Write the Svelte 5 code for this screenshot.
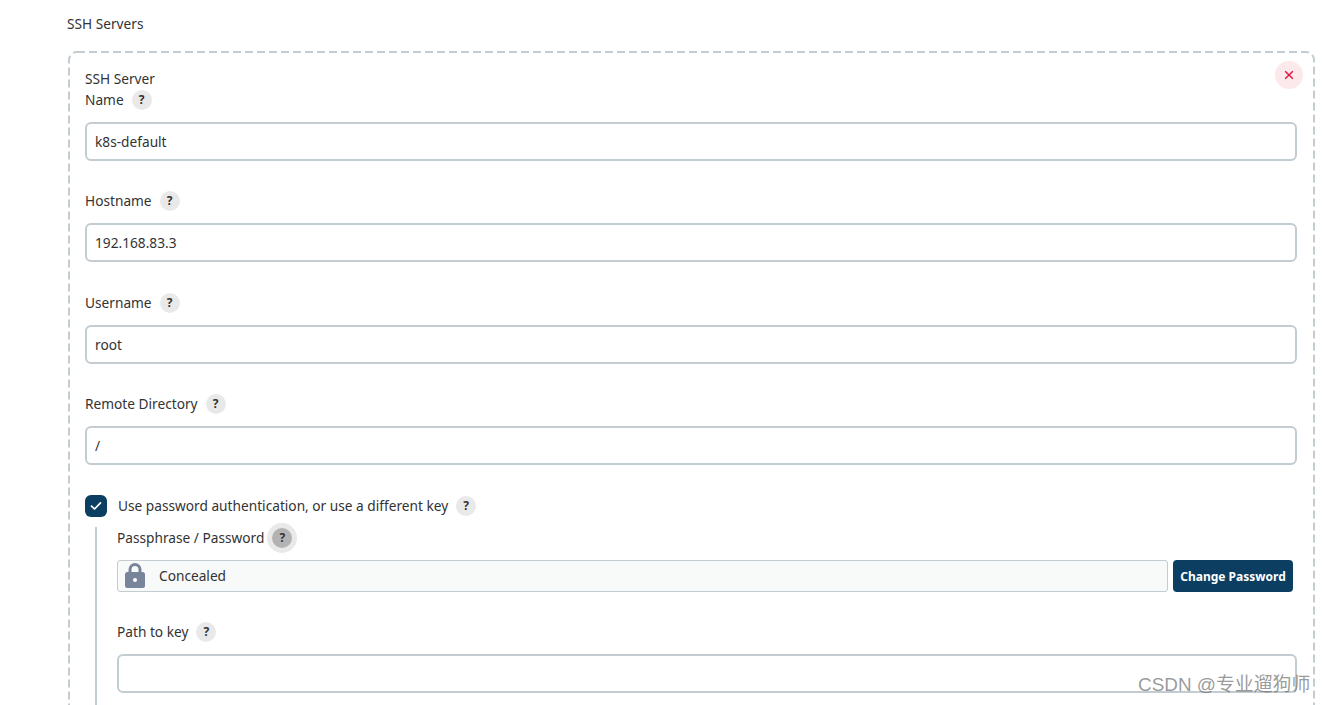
<script lang="ts">
	interface Field {
		label: string;
		value: string;
	}

	const fields: Field[] = [
		{ label: 'Hostname', value: '192.168.83.3' },
		{ label: 'Username', value: 'root' },
		{ label: 'Remote Directory', value: '/' }
	];
</script>

<div class="page">
	<div class="section-title">SSH Servers</div>

	<div class="repeated">
		<svg class="dashes" aria-hidden="true"><rect class="dash-rect" /></svg>

		<button class="delete" aria-label="Delete">
			<svg width="10" height="10" viewBox="0 0 10 10">
				<path d="M1.2 1.2 8.8 8.8M8.8 1.2 1.2 8.8" stroke="#e6103c" stroke-width="1.4" fill="none" />
			</svg>
		</button>

		<div class="server-title">SSH Server</div>
		<div class="label">Name <span class="help">?</span></div>
		<input class="text" value="k8s-default" />

		{#each fields as field}
			<div class="label">{field.label} <span class="help">?</span></div>
			<input class="text" value={field.value} />
		{/each}

		<div class="check-row">
			<span class="checkbox">
				<svg width="12" height="10" viewBox="0 0 12 10">
					<path d="M1.5 5.2 4.5 8 10.5 1.8" stroke="#fff" stroke-width="1.7" fill="none" stroke-linecap="round" stroke-linejoin="round" />
				</svg>
			</span>
			<span class="check-label">Use password authentication, or use a different key</span>
			<span class="help">?</span>
		</div>

		<div class="nested">
			<div class="label">Passphrase / Password <span class="help hovered">?</span></div>
			<div class="pass-row">
				<div class="concealed">
					<svg width="20" height="25" viewBox="0 0 20 25">
						<path d="M5 10V6.5a5 5 0 0 1 10 0V10" stroke="#78849a" stroke-width="3" fill="none" />
						<rect x="0" y="9" width="20" height="16" rx="2.5" fill="#78849a" />
						<circle cx="10" cy="17" r="2" fill="#fff" />
					</svg>
					<span>Concealed</span>
				</div>
				<button class="change">Change Password</button>
			</div>
			<div class="label key-label">Path to key <span class="help">?</span></div>
			<input class="text" value="" />
		</div>
	</div>

	<div class="watermark">CSDN @专业遛狗师</div>
</div>

<style>
	:global(body) {
		margin: 0;
		background: #fff;
	}

	.page {
		position: relative;
		height: 705px;
		overflow: hidden;
		padding: 14px 10px 0 68px;
		box-sizing: border-box;
		font-family: 'Noto Sans', 'Noto Sans CJK SC', sans-serif;
		font-size: 13.7px;
		color: #333;
	}

	.section-title {
		line-height: 20px;
		height: 20px;
		margin-left: -1px;
	}

	.repeated {
		position: relative;
		margin-top: 17px;
		padding: 18px 18px 0 17px;
		height: 800px;
		box-sizing: border-box;
	}

	/* svg outline because a css dashed border can't do the 8/4 dash length */
	.dashes {
		position: absolute;
		inset: 0;
		width: 100%;
		height: 100%;
		pointer-events: none;
	}

	.dash-rect {
		x: 1px;
		y: 1px;
		width: calc(100% - 2px);
		height: calc(100% - 2px);
		rx: 8px;
		fill: none;
		stroke: #c3ccd1;
		stroke-width: 2;
		stroke-dasharray: 8 4;
	}

	.delete {
		position: absolute;
		top: 10px;
		right: 12px;
		width: 28px;
		height: 28px;
		padding: 0;
		border: 0;
		border-radius: 50%;
		background: #fbe9ec;
		display: flex;
		align-items: center;
		justify-content: center;
	}

	.server-title {
		line-height: 20px;
	}

	.label {
		display: flex;
		align-items: center;
		gap: 8px;
		height: 22px;
		margin: 0 0 11px;
		line-height: 20px;
	}

	.help {
		display: inline-flex;
		align-items: center;
		justify-content: center;
		width: 20px;
		height: 20px;
		border-radius: 50%;
		background: #e9e9e9;
		color: #333;
		font-size: 12px;
		font-weight: 700;
		line-height: 1;
	}

	.help.hovered {
		background: #b3b3b3;
		box-shadow: 0 0 0 5px #e9e9e9;
	}

	.text {
		display: block;
		width: 100%;
		height: 39px;
		box-sizing: border-box;
		margin: 0 0 29.4px;
		padding: 0 8px;
		border: 2px solid #c3ccd1;
		border-radius: 6px;
		background: #fff;
		font: inherit;
		color: #333;
		outline: none;
	}

	.check-row {
		display: flex;
		align-items: center;
		height: 22px;
		margin-top: 0.4px;
	}

	.checkbox {
		display: flex;
		align-items: center;
		justify-content: center;
		width: 22px;
		height: 22px;
		border-radius: 6px;
		background: #0b3e60;
		margin-right: 11px;
	}

	.check-label {
		margin-right: 8px;
	}

	.nested {
		margin: 10px 0 0 10px;
		padding: 0 0 0 20px;
		border-left: 2px solid #c3ccd1;
		height: 300px;
	}

	.pass-row {
		display: flex;
		gap: 5px;
		height: 32px;
		padding-right: 4px;
	}

	.concealed {
		flex: 1;
		display: flex;
		align-items: center;
		box-sizing: border-box;
		border: 1px solid #c3ccd1;
		border-radius: 3px;
		background: #f8f9f9;
		padding-left: 7px;
		gap: 14px;
	}

	.change {
		width: 120px;
		height: 32px;
		padding: 1px 0 0;
		border: 0;
		border-radius: 4px;
		background: #0b3e60;
		color: #fff;
		font: inherit;
		font-size: 12px;
		font-weight: 700;
	}

	.key-label {
		margin-top: 29px;
	}

	.watermark {
		position: absolute;
		left: 1138px;
		top: 672px;
		font-family: 'Liberation Sans', 'Noto Sans CJK SC', sans-serif;
		font-size: 18.9px;
		line-height: 26px;
		color: rgba(110, 110, 110, 0.7);
		white-space: nowrap;
	}
</style>
